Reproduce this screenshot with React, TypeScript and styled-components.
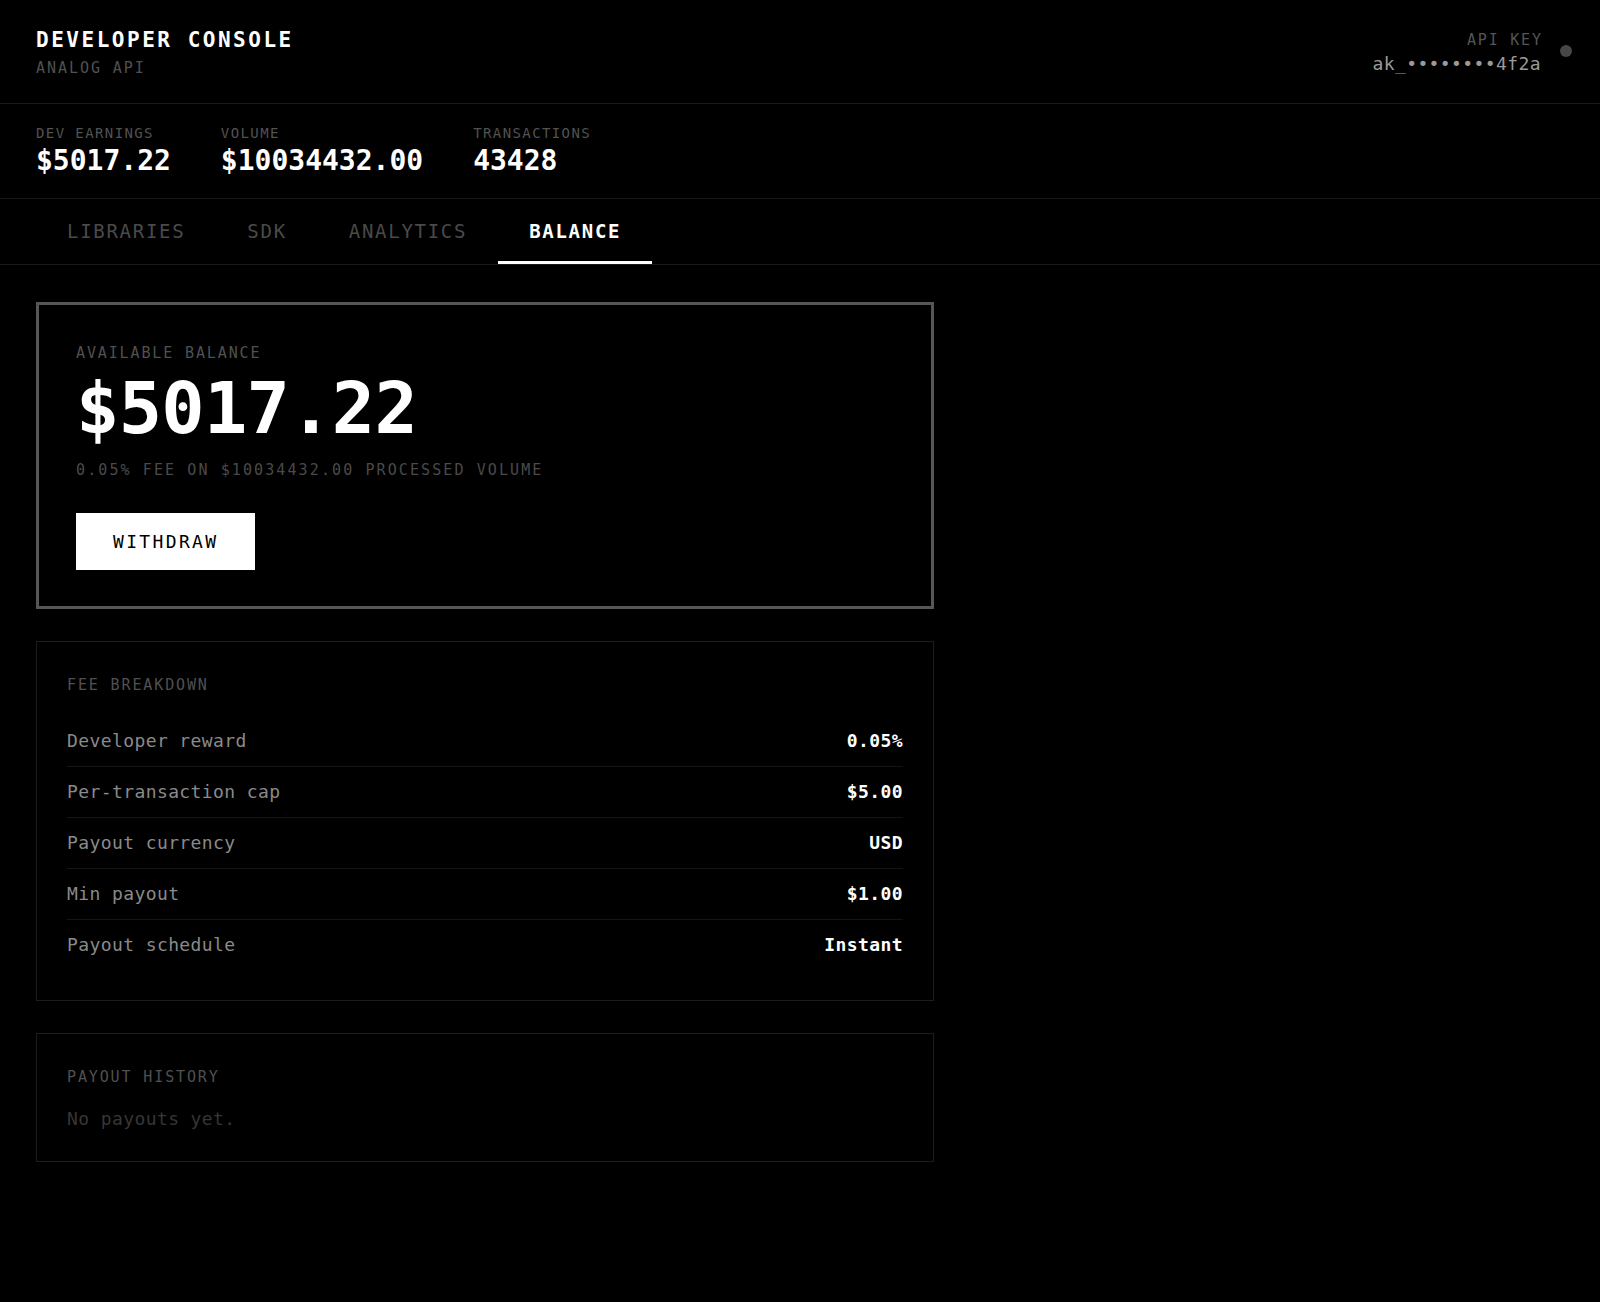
import React from "react";
import styled, { createGlobalStyle } from "styled-components";

const MONO = `"DejaVu Sans Mono", "Liberation Mono", monospace`;

const GlobalStyle = createGlobalStyle`
  html, body {
    margin: 0;
    padding: 0;
    background: #000;
  }
  body {
    font-family: ${MONO};
    color: #fff;
    min-height: 100vh;
  }
  * {
    box-sizing: border-box;
  }
`;

const stats = [
  { label: "DEV EARNINGS", value: "$5017.22" },
  { label: "VOLUME", value: "$10034432.00" },
  { label: "TRANSACTIONS", value: "43428" },
];

const tabs = ["LIBRARIES", "SDK", "ANALYTICS", "BALANCE"];

const feeRows = [
  { label: "Developer reward", value: "0.05%" },
  { label: "Per-transaction cap", value: "$5.00" },
  { label: "Payout currency", value: "USD" },
  { label: "Min payout", value: "$1.00" },
  { label: "Payout schedule", value: "Instant" },
];

const App: React.FC = () => {
  return (
    <Page>
      <GlobalStyle />
      <Header>
        <Brand>
          <Title>DEVELOPER CONSOLE</Title>
          <Subtitle>ANALOG API</Subtitle>
        </Brand>
        <KeyBlock>
          <KeyLabel>API KEY</KeyLabel>
          <KeyValue>ak_••••••••4f2a</KeyValue>
        </KeyBlock>
        <StatusDot />
      </Header>

      <StatsBar>
        {stats.map((s) => (
          <Stat key={s.label}>
            <StatLabel>{s.label}</StatLabel>
            <StatValue>{s.value}</StatValue>
          </Stat>
        ))}
      </StatsBar>

      <TabBar>
        {tabs.map((t) => (
          <Tab key={t} $active={t === "BALANCE"}>
            {t}
          </Tab>
        ))}
      </TabBar>

      <Main>
        <Column>
          <BalanceCard>
            <CardLabel>AVAILABLE BALANCE</CardLabel>
            <BigAmount>$5017.22</BigAmount>
            <FeeNote>0.05% FEE ON $10034432.00 PROCESSED VOLUME</FeeNote>
            <WithdrawButton>WITHDRAW</WithdrawButton>
          </BalanceCard>

          <Panel>
            <CardLabel>FEE BREAKDOWN</CardLabel>
            <RowList>
              {feeRows.map((r) => (
                <Row key={r.label}>
                  <RowLabel>{r.label}</RowLabel>
                  <RowValue>{r.value}</RowValue>
                </Row>
              ))}
            </RowList>
          </Panel>

          <Panel>
            <CardLabel>PAYOUT HISTORY</CardLabel>
            <EmptyText>No payouts yet.</EmptyText>
          </Panel>
        </Column>
      </Main>
    </Page>
  );
};

const Page = styled.div`
  background: #000;
  min-height: 100vh;
`;

const Header = styled.header`
  display: flex;
  align-items: flex-start;
  padding: 27px 28px 25px 36px;
  border-bottom: 1px solid #1a1a1a;
`;

const Brand = styled.div`
  display: flex;
  flex-direction: column;
  flex: 1;
`;

const Title = styled.h1`
  margin: 0;
  font-size: 21px;
  line-height: 26px;
  font-weight: 700;
  letter-spacing: 0.12em;
  color: #fff;
`;

const Subtitle = styled.div`
  margin-top: 5px;
  font-size: 15px;
  line-height: 20px;
  letter-spacing: 0.13em;
  color: #505050;
`;

const KeyBlock = styled.div`
  display: flex;
  flex-direction: column;
  align-items: flex-end;
  padding-top: 4px;
  gap: 3px;
`;

const KeyLabel = styled.div`
  font-size: 15px;
  line-height: 18px;
  letter-spacing: 0.12em;
  margin-right: -0.12em;
  color: #555;
`;

const KeyValue = styled.div`
  font-size: 18px;
  line-height: 24px;
  letter-spacing: 0.4px;
  color: #9a9a9a;
`;

const StatusDot = styled.span`
  width: 12px;
  height: 12px;
  border-radius: 50%;
  background: #474747;
  margin-left: 19px;
  margin-top: 18px;
`;

const StatsBar = styled.section`
  display: flex;
  gap: 50px;
  padding: 21px 36px 21px;
  border-bottom: 1px solid #1a1a1a;
`;

const Stat = styled.div`
  display: flex;
  flex-direction: column;
  gap: 4px;
`;

const StatLabel = styled.div`
  font-size: 14px;
  line-height: 16px;
  letter-spacing: 0.1em;
  color: #525252;
`;

const StatValue = styled.div`
  font-size: 28px;
  line-height: 32px;
  font-weight: 700;
  color: #fff;
`;

const TabBar = styled.nav`
  display: flex;
  padding: 0 36px;
  border-bottom: 1px solid #1a1a1a;
`;

const Tab = styled.button<{ $active?: boolean }>`
  background: none;
  border: none;
  border-bottom: 3px solid ${(p) => (p.$active ? "#fff" : "transparent")};
  padding: 20px 31px 18px;
  font-family: ${MONO};
  font-size: 19px;
  line-height: 24px;
  letter-spacing: 0.09em;
  font-weight: ${(p) => (p.$active ? 700 : 400)};
  color: ${(p) => (p.$active ? "#fff" : "#4a4a4a")};
  cursor: pointer;
`;

const Main = styled.main`
  padding: 37px 36px 60px;
`;

const Column = styled.div`
  display: flex;
  flex-direction: column;
  gap: 32px;
  max-width: 898px;
`;

const BalanceCard = styled.section`
  display: flex;
  flex-direction: column;
  align-items: flex-start;
  border: 3px solid #565656;
  padding: 39px 37px 36px;
`;

const CardLabel = styled.div`
  font-size: 15px;
  line-height: 18px;
  letter-spacing: 0.125em;
  color: #505050;
`;

const BigAmount = styled.div`
  margin-top: 10px;
  font-size: 72px;
  line-height: 72px;
  font-weight: 700;
  letter-spacing: -0.01em;
  color: #fff;
`;

const FeeNote = styled.div`
  margin-top: 17px;
  font-size: 15px;
  line-height: 18px;
  letter-spacing: 0.14em;
  color: #4a4a4a;
`;

const WithdrawButton = styled.button`
  margin-top: 34px;
  padding: 18px 37px;
  background: #fff;
  border: none;
  font-family: ${MONO};
  font-size: 18px;
  line-height: 21px;
  letter-spacing: 0.13em;
  color: #000;
  cursor: pointer;
`;

const Panel = styled.section`
  border: 1px solid #1c1c1c;
  padding: 34px 30px 30px;
`;

const RowList = styled.div`
  margin-top: 22px;
  display: flex;
  flex-direction: column;
`;

const Row = styled.div`
  display: flex;
  justify-content: space-between;
  align-items: center;
  padding: 13px 0;
  font-size: 18px;
  line-height: 24px;
  letter-spacing: 0.4px;
  border-bottom: 1px solid #141414;

  &:last-child {
    border-bottom: none;
  }
`;

const RowLabel = styled.span`
  color: #8a8a8a;
`;

const RowValue = styled.span`
  color: #fff;
  font-weight: 700;
`;

const EmptyText = styled.div`
  margin-top: 21px;
  font-size: 18px;
  line-height: 24px;
  letter-spacing: 0.4px;
  color: #363636;
`;

export default App;
